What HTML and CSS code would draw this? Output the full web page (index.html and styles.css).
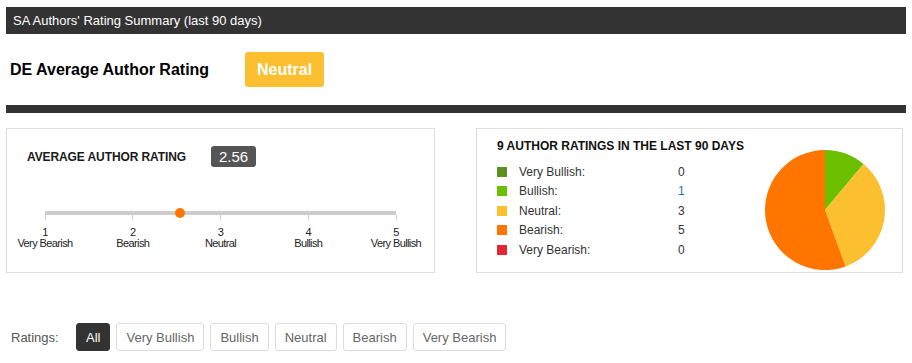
FILE: index.html
```html
<!DOCTYPE html>
<html lang="en">
<head>
  <meta charset="UTF-8">
  <title>SA Authors' Rating Summary</title>
  <link rel="stylesheet" href="styles.css">
</head>
<body>
  <div class="summary-header">SA Authors' Rating Summary (last 90 days)</div>

  <div class="summary-title">
    <h2>DE Average Author Rating</h2>
    <span class="rating-badge">Neutral</span>
  </div>

  <div class="divider"></div>

  <div class="cards">
    <div class="card avg-card">
      <div class="avg-head">
        <span class="avg-label">AVERAGE AUTHOR RATING</span>
        <span class="avg-value">2.56</span>
      </div>
      <div class="scale">
        <div class="track">
          <span class="dot" style="left: 38.5%"></span>
        </div>
        <div class="ticks">
          <div class="tick"><i></i><b>1</b><span>Very Bearish</span></div>
          <div class="tick"><i></i><b>2</b><span>Bearish</span></div>
          <div class="tick"><i></i><b>3</b><span>Neutral</span></div>
          <div class="tick"><i></i><b>4</b><span>Bullish</span></div>
          <div class="tick"><i></i><b>5</b><span>Very Bullish</span></div>
        </div>
      </div>
    </div>

    <div class="card count-card">
      <div class="legend">
        <h3>9 AUTHOR RATINGS IN THE LAST 90 DAYS</h3>
        <ul>
          <li><span class="swatch very-bullish"></span><span class="name">Very Bullish:</span><span class="num">0</span></li>
          <li><span class="swatch bullish"></span><span class="name">Bullish:</span><span class="num link">1</span></li>
          <li><span class="swatch neutral"></span><span class="name">Neutral:</span><span class="num">3</span></li>
          <li><span class="swatch bearish"></span><span class="name">Bearish:</span><span class="num">5</span></li>
          <li><span class="swatch very-bearish"></span><span class="name">Very Bearish:</span><span class="num">0</span></li>
        </ul>
      </div>
      <svg class="pie" width="120" height="120" viewBox="0 0 120 120">
        <path d="M60 60 L60 0 A60 60 0 0 1 98.57 14.04 Z" fill="#6bbf00"/>
        <path d="M60 60 L98.57 14.04 A60 60 0 0 1 80.52 116.38 Z" fill="#fbbf2f"/>
        <path d="M60 60 L80.52 116.38 A60 60 0 1 1 60 0 Z" fill="#ff7500"/>
      </svg>
    </div>
  </div>

  <div class="filters">
    <span class="filters-label">Ratings:</span>
    <button class="filter active">All</button>
    <button class="filter">Very Bullish</button>
    <button class="filter">Bullish</button>
    <button class="filter">Neutral</button>
    <button class="filter">Bearish</button>
    <button class="filter">Very Bearish</button>
  </div>
</body>
</html>
```

FILE: styles.css
```css
body {
  margin: 0;
  padding: 7px 6px;
  font-family: 'Liberation Sans', Arial, sans-serif;
  color: #333;
  background-color: #fff;
}
.summary-header {
  height: 27px;
  line-height: 27px;
  padding-left: 7px;
  background-color: #333;
  color: #fff;
  font-size: 13px;
}
.summary-title {
  display: flex;
  align-items: center;
  padding: 18px 0 18px 4px;
}
.summary-title h2 {
  flex: 0 0 235px;
  margin: 0;
  font-size: 16px;
  color: #000;
}
.rating-badge {
  height: 35px;
  line-height: 35px;
  padding: 0 12px;
  background-color: #fbbf2f;
  color: #fff;
  font-size: 16px;
  font-weight: bold;
  border-radius: 3px;
}
.divider {
  height: 8px;
  background-color: #333;
}
.cards {
  display: grid;
  grid-template-columns: 429px 427px;
  column-gap: 41px;
  margin-top: 15px;
}
.card {
  box-sizing: border-box;
  height: 145px;
  border: 1px solid #ddd;
}
.avg-card {
  padding: 17px 0 0 20px;
}
.avg-head {
  display: flex;
  align-items: center;
}
.avg-label {
  flex: 0 0 184px;
  font-size: 12px;
  font-weight: bold;
  letter-spacing: -0.1px;
  color: #1a1a1a;
}
.avg-value {
  height: 21px;
  line-height: 21px;
  padding: 0 8px;
  background-color: #555;
  color: #fff;
  font-size: 15px;
  border-radius: 3px;
}
.scale {
  width: 351px;
  margin: 44px 0 0 18px;
}
.track {
  position: relative;
  height: 4px;
  background-color: #ccc;
}
.dot {
  position: absolute;
  top: -3px;
  width: 10px;
  height: 10px;
  margin-left: -5px;
  border-radius: 50%;
  background-color: #ff7500;
}
.ticks {
  display: flex;
  justify-content: space-between;
}
.tick {
  width: 0;
  display: flex;
  flex-direction: column;
  align-items: center;
  font-size: 11px;
  line-height: 11px;
  letter-spacing: -0.6px;
  color: #222;
  white-space: nowrap;
}
.tick i {
  width: 1px;
  height: 5px;
  margin-bottom: 7px;
  background-color: #ccc;
}
.tick b {
  font-weight: normal;
}
.count-card {
  display: flex;
  align-items: flex-start;
  justify-content: space-between;
  padding: 10px 17px 0 20px;
}
.legend h3 {
  margin: 0 0 9px;
  font-size: 12px;
  line-height: 14px;
  color: #111;
}
.legend ul {
  margin: 0;
  padding: 0;
  list-style: none;
}
.legend li {
  display: flex;
  align-items: center;
  height: 19.5px;
  font-size: 12px;
}
.swatch {
  width: 10px;
  height: 10px;
  margin-right: 12px;
}
.very-bullish { background-color: #5b8f1e; }
.bullish { background-color: #6bbf00; }
.neutral { background-color: #fbbf2f; }
.bearish { background-color: #ff7500; }
.very-bearish { background-color: #e3262f; }
.name {
  width: 159px;
}
.num.link {
  color: #2a6db5;
}
.pie {
  margin-top: 11px;
}
.filters {
  display: flex;
  align-items: center;
  gap: 6px;
  margin-top: 50px;
  padding-left: 5px;
}
.filters-label {
  width: 59px;
  font-size: 13px;
  color: #555;
}
.filter {
  height: 28px;
  padding: 0 9px;
  border: 1px solid #ddd;
  border-radius: 3px;
  background-color: #fff;
  color: #666;
  font-family: inherit;
  font-size: 13px;
}
.filter.active {
  background-color: #333;
  border-color: #333;
  color: #fff;
}
```
